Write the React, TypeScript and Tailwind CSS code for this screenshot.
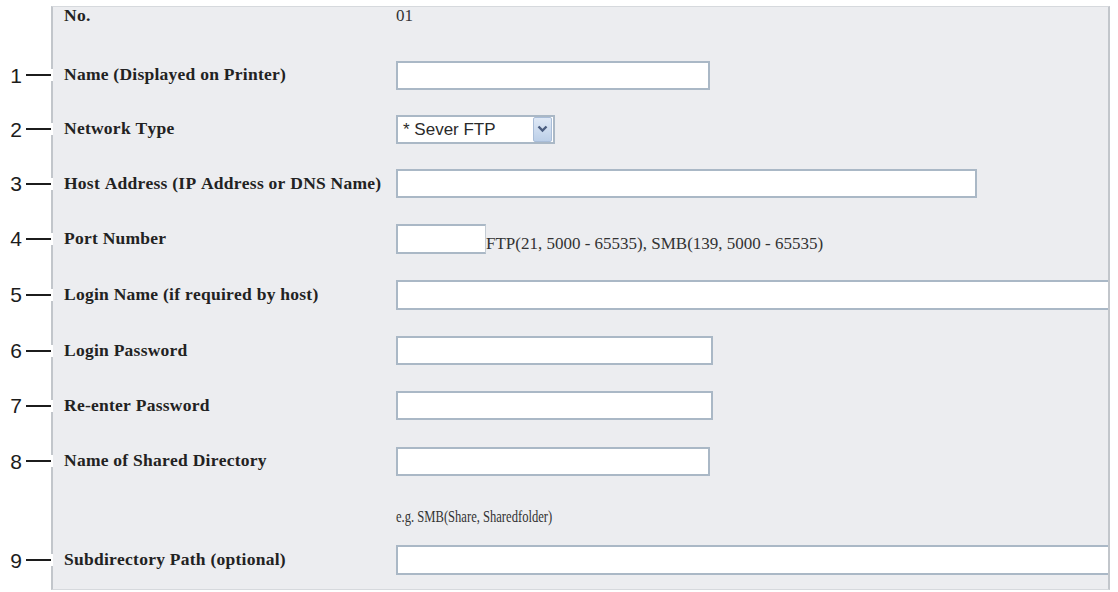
import React from 'react';

type Row = {
  no?: string;
  label: string;
  h: string;
  field: React.ReactNode;
};

const serif = { fontFamily: '"Liberation Serif", "Times New Roman", serif' };

function TextBox({ w }: { w: string }) {
  return (
    <input
      type="text"
      readOnly
      className={`${w} h-[29px] bg-white border-2 border-[#aab8c6] outline-none`}
    />
  );
}

function WideBox() {
  // runs to the panel edge, right side is cut off by the border
  return (
    <input
      type="text"
      readOnly
      className="flex-1 h-[30px] bg-white border-2 border-r-0 border-[#aab8c6] outline-none"
    />
  );
}

function NetworkSelect() {
  return (
    <div className="w-[159px] h-[29px] bg-white border-2 border-[#aab8c6] flex items-center justify-between pl-[5px] pr-px">
      <span
        className="text-[17px] text-[#2a2a2a] leading-none"
        style={{ fontFamily: '"Liberation Sans", Arial, sans-serif' }}
      >
        * Sever FTP
      </span>
      <span className="w-[19px] h-[25px] rounded-[2px] border border-[#a9bdd8] bg-gradient-to-b from-[#dfe9f6] to-[#bccfe8] flex items-center justify-center">
        <svg width="11" height="8" viewBox="0 0 11 8">
          <path d="M1.5 1.5 L5.5 5.5 L9.5 1.5" fill="none" stroke="#4a5d80" strokeWidth="2.4" />
        </svg>
      </span>
    </div>
  );
}

const rows: Row[] = [
  { no: '1', label: 'Name (Displayed on Printer)', h: 'h-[54px]', field: <TextBox w="w-[314px]" /> },
  { no: '2', label: 'Network Type', h: 'h-[54px]', field: <NetworkSelect /> },
  { no: '3', label: 'Host Address (IP Address or DNS Name)', h: 'h-[55px]', field: <TextBox w="w-[581px]" /> },
  {
    no: '4',
    label: 'Port Number',
    h: 'h-[55px]',
    field: (
      <div className="flex items-end">
        <input type="text" readOnly className="w-[90px] h-[30px] bg-white border-2 border-r border-[#aab8c6] border-r-[#c4ccd4] outline-none" />
        <span className="text-[17px] text-[#333] leading-none mb-[2px]" style={serif}>
          FTP(21, 5000 - 65535), SMB(139, 5000 - 65535)
        </span>
      </div>
    ),
  },
  { no: '5', label: 'Login Name (if required by host)', h: 'h-[57px]', field: <WideBox /> },
  { no: '6', label: 'Login Password', h: 'h-[55px]', field: <TextBox w="w-[317px]" /> },
  { no: '7', label: 'Re-enter Password', h: 'h-[55px]', field: <TextBox w="w-[317px]" /> },
  { no: '8', label: 'Name of Shared Directory', h: 'h-[56px]', field: <TextBox w="w-[314px]" /> },
  {
    label: '',
    h: 'h-[54px]',
    field: (
      <span className="text-[17px] text-[#333] leading-none scale-x-[0.74] origin-left whitespace-nowrap" style={serif}>
        e.g. SMB(Share, Sharedfolder)
      </span>
    ),
  },
  { no: '9', label: 'Subdirectory Path (optional)', h: 'h-[34px]', field: <WideBox /> },
];

function Marker({ no }: { no?: string }) {
  if (!no) return <div className="w-[51px] shrink-0" />;
  return (
    <div className="w-[51px] shrink-0 flex items-center justify-end">
      <span
        className="text-[21px] leading-none text-[#1c1c1c] mr-[4px]"
        style={{ fontFamily: '"Liberation Sans", Arial, sans-serif' }}
      >
        {no}
      </span>
      {/* leader line, breaks the panel's left border */}
      <span className="relative z-10 -mr-[2px] w-[27px] h-[12px] bg-white flex items-center">
        <span className="w-[25px] h-[2px] bg-[#1c1c1c]" />
      </span>
    </div>
  );
}

const labelCls =
  'w-[343px] shrink-0 pl-[11px] text-[17.5px] font-bold text-[#222] leading-none whitespace-nowrap tracking-[0.25px] [font-kerning:none]';

export default function App() {
  return (
    <div className="w-[1118px] h-[592px] bg-white pt-[6px] overflow-hidden">
      <div className="w-[1110px]">
        {/* header row */}
        <div className="flex">
          <div className="w-[51px] shrink-0" />
          <div className="flex-1 h-[42px] bg-[#ecedf0] border-t border-t-[#d6d9dd] border-x-2 border-x-[#c2c6cb] flex items-start">
            <div className={labelCls} style={serif}>
              No.
            </div>
            <div className="text-[17px] text-[#333] leading-none" style={serif}>
              01
            </div>
          </div>
        </div>

        {rows.map((r, i) => (
          <div key={i} className={`flex ${r.h}`}>
            <Marker no={r.no} />
            <div className="flex-1 bg-[#ecedf0] border-x-2 border-x-[#c2c6cb] flex items-center overflow-hidden">
              <div className={labelCls} style={serif}>
                {r.label}
              </div>
              <div className="flex-1 flex items-center">{r.field}</div>
            </div>
          </div>
        ))}

        {/* bottom padding */}
        <div className="flex">
          <div className="w-[51px] shrink-0" />
          <div className="flex-1 h-[13px] bg-[#ecedf0] border-x-2 border-x-[#c2c6cb] border-b border-b-[#d6d9dd]" />
        </div>
      </div>
    </div>
  );
}
